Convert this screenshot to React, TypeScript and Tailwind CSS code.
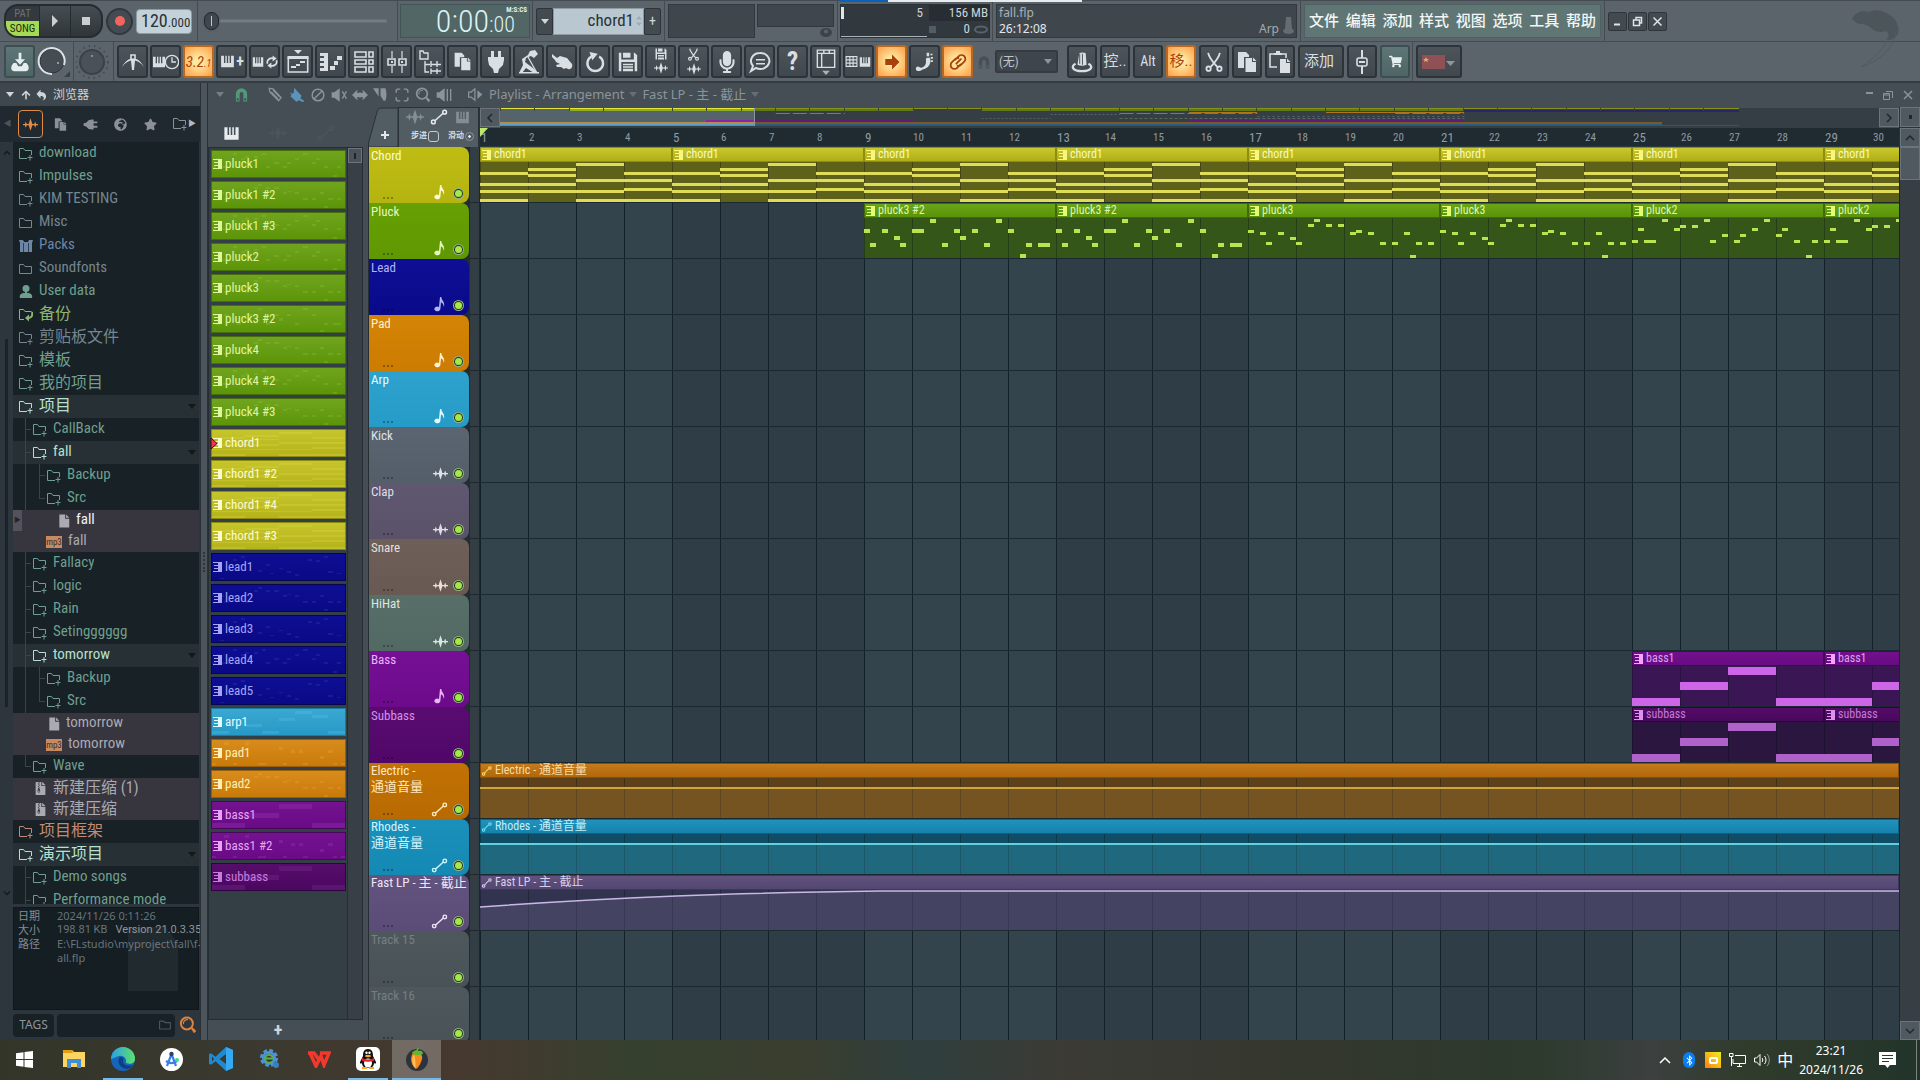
import React from "react";
import {
  FaRegFolder, FaStar, FaGlobeAfrica, FaFileArchive, FaMicrophone, FaShoppingCart, FaArrowUp, FaBluetoothB,
} from "react-icons/fa";

type Note = [number, number, number, number];

const NARROW = "[font-family:'Roboto_Condensed','Open_Sans_Condensed','Liberation_Sans_Narrow','Noto_Sans_CJK_SC',sans-serif]";

/* ---------- note data: x, y, width, height inside a 192 x 40 clip ---------- */
const bar = (b: number, ys: number[]): Note[] => ys.map((y) => [b * 48, y, 48, 3]);
const CHORD: Note[] = [
  ...bar(0, [10, 21, 28, 37]),
  ...bar(1, [6, 12, 21, 28]),
  ...bar(2, [1, 17, 28, 37]),
  ...bar(3, [10, 17, 26, 37]),
];
const steps = (list: number[][], h: number): Note[] => list.map(([s, y]) => [s * 6, y, 6, h]);
const PLUCK3B = steps([[0, 11], [1, 25], [3, 11], [5, 18], [6, 25], [8, 11], [9, 11], [11, 1], [13, 25], [15, 11], [16, 18], [18, 11], [20, 25], [22, 1], [24, 11], [26, 36], [27, 25], [29, 25], [30, 25]], 4);
const PLUCK3 = steps([[0, 12], [2, 14], [3, 24], [5, 14], [7, 19], [8, 24], [10, 6], [11, 1], [13, 6], [15, 6], [17, 14], [18, 12], [20, 14], [22, 24], [24, 24], [26, 14], [27, 37], [28, 24], [30, 24]], 3);
const PLUCK2 = steps([[0, 22], [1, 10], [2, 22], [3, 22], [5, 1], [7, 10], [8, 7], [10, 7], [12, 1], [13, 22], [15, 16], [17, 22], [18, 16], [20, 10], [22, 1], [24, 16], [25, 10], [27, 22], [29, 37], [30, 22]], 3);
const BASS: Note[] = [[0, 32, 48, 8], [48, 16, 48, 8], [96, 1, 48, 8], [144, 32, 48, 8]];
const LEAD = steps([[2, 36], [5, 6], [7, 1], [11, 24], [13, 14], [14, 28], [16, 20], [18, 26], [20, 30], [23, 6], [25, 8], [27, 1], [28, 26], [30, 28]], 3);
const ARP: Note[] = [[0, 34, 24, 5], [48, 22, 24, 5], [72, 34, 24, 5], [96, 12, 24, 5], [120, 1, 24, 5], [144, 8, 24, 5], [168, 34, 24, 5]];
const PAD = steps([[0, 35], [3, 2], [5, 35], [8, 2], [11, 35], [12, 35], [16, 10], [17, 35], [19, 15], [21, 15], [22, 35], [26, 24], [28, 15], [29, 35], [31, 35]], 4);

function Notes({ notes, color, opacity = 1, className }: { notes: Note[]; color: string; opacity?: number; className: string }) {
  return (
    <svg viewBox="0 0 192 40" preserveAspectRatio="none" className={className} aria-hidden="true">
      <g fill={color} opacity={opacity} shapeRendering="crispEdges">
        {notes.map(([x, y, w, h], i) => <rect key={i} x={x} y={y} width={w} height={h} />)}
      </g>
    </svg>
  );
}

/* ---------- drawn icons ---------- */
function Ico({ children, size = 24, className = "" }: { children: React.ReactNode; size?: number; className?: string }) {
  return (
    <svg width={size} height={size} viewBox="0 0 24 24" fill="currentColor" className={`shrink-0 ${className}`} aria-hidden="true">
      {children}
    </svg>
  );
}
const stroke = { fill: "none", stroke: "currentColor", strokeWidth: 1.6 } as const;
const Piano = () => <path d="M3 4h4v10h2V4h2v10h2V4h2v10h2V4h4v16H3z" />;
const Wave = () => <path d="M0 11h3l1.500-4L6 11h3l3-9 3 9h3l1.500-4 1.500 4h3v2h-3l-1.500 4-1.500-4h-3l-3 9-3-9H6l-1.500 4L3 13H0z" />;
const Auto = () => <g {...stroke} strokeWidth="2"><circle cx="4.500" cy="18.500" r="2.500" /><circle cx="19.500" cy="5.500" r="2.500" /><path d="M6.500 17 17.500 7" /></g>;
const Pages = () => <><path d="M3 2h8l3 3v2H9v11H3z" /><path d="M10.500 8H17v4h4v10H10.500z" /><path d="M18 7.500 21.500 11H18z" /></>;
const Page = () => <><path d="M4 1h10v7h7v15H4z" /><path d="M15.500 1 21 6.500h-5.500z" /></>;
const Floppy = () => <><path d="M1 1h3v8h15V1h1l3 3v19h-3v-11H4v11H1z" /><path d="M6 1h9v6H6z" /><path d="M6 14h12v2H6zM6 17h12v2H6zM6 20h12v3H6z" /></>;
const Scissors = () => <g {...stroke} strokeWidth="2.200"><path d="M5 1c1 6 5 10 11 17M19 1c-1 6-5 10-11 17" /><circle cx="5.500" cy="20" r="2.600" /><circle cx="18.500" cy="20" r="2.600" /></g>;
const Magnet = () => <path d="M3 23V11a9 9 0 0 1 18 0v12h-6V11a3 3 0 0 0-6 0v12zM4.500 18v3.500h3V18zM16.500 18v3.500h3V18z" fillRule="evenodd" />;
const Lens = () => <><circle cx="10.500" cy="10" r="8" {...stroke} strokeWidth="2.600" /><path d="M6 11a5 5 0 0 1 6-6" {...stroke} strokeWidth="1.500" /><path d="m16 17 2-2 5 5-3 3z" /></>;
const Plug = () => <path d="M7 1h3v6h4V1h3v6h3v3l-1 5-4 4-1 4h-4l-1-4-4-4-1-5V7h3z" />;
const PatIcon = ({ className = "" }: { className?: string }) => (
  <svg width="9" height="10" viewBox="0 0 9 10" fill="currentColor" shapeRendering="crispEdges" className={`shrink-0 ${className}`} aria-hidden="true">
    <path d="M0 0h9v10H0V9h5V7H1V6h4V4H1V3h4V1H0z" />
  </svg>
);
const Tri = ({ className = "" }: { className?: string }) => (
  <svg width="8" height="5" viewBox="0 0 8 5" fill="currentColor" className={`shrink-0 ${className}`} aria-hidden="true"><path d="M0 0h8L4 5z" /></svg>
);
const FolderPlus = ({ className = "" }: { className?: string }) => (
  <svg width="14" height="14" viewBox="0 0 14 14" fill="none" stroke="currentColor" className={`shrink-0 ${className}`} aria-hidden="true">
    <path d="M8 11.500H.5v-10h4l1.500 2h6.500V8M8.500 10.500h5M11 8v5.500" />
  </svg>
);
const Folder = () => (
  <svg width="14" height="12" viewBox="0 0 14 12" fill="none" stroke="currentColor" className="shrink-0" aria-hidden="true"><path d="M.5 10.500v-9h4l1.500 2h6.500v7z" /></svg>
);

/* ---------- top bar ---------- */
const Well = ({ className = "", children }: { className?: string; children?: React.ReactNode }) => (
  <div className={`border border-[#31393f] bg-[#3f474d] ${className}`}>{children}</div>
);
const Section = ({ className = "", children }: { className?: string; children?: React.ReactNode }) => (
  <div className={`flex h-full shrink-0 items-center border-r border-[#444c52] ${className}`}>{children}</div>
);
const Spin = ({ className = "" }: { className?: string }) => (
  <svg width="6" height="12" viewBox="0 0 6 12" fill="#9fabb2" className={className} aria-hidden="true"><path d="M0 4.500 3 1l3 3.500zM0 7.500h6L3 11z" /></svg>
);

function TopBar() {
  const menus = ["文件", "编辑", "添加", "样式", "视图", "选项", "工具", "帮助"];
  return (
    <header className="flex h-[42px] shrink-0 items-center border-b border-t border-[#444c52] bg-[#5b646a]">
      <Section className="w-[198px] pl-1">
        <div className="flex h-[34px] w-[99px] overflow-hidden rounded-[14px] border-2 border-[#262b2f] bg-[#262b2f]">
          <button className="flex w-[33px] flex-col items-center bg-[#33393d] text-[11px] leading-[15px]" aria-label="Pattern or song mode">
            <span className="text-[#6a7277]">PAT</span>
            <span className="w-full bg-[#a3dc52] text-center text-[#1d2a10]">SONG</span>
          </button>
          <button className="ml-px flex w-[30px] items-center justify-center bg-gradient-to-b from-[#474e53] to-[#2f3539]" aria-label="Play">
            <svg width="8" height="12" fill="#c9ced1"><path d="M1 0v12l6-6z" /></svg>
          </button>
          <button className="ml-px flex flex-1 items-center justify-center bg-gradient-to-b from-[#474e53] to-[#2f3539]" aria-label="Stop">
            <span className="size-2 bg-[#c9ced1]" />
          </button>
        </div>
        <button className="ml-[3px] flex size-[27px] items-center justify-center rounded-full border-2 border-[#31373c] bg-[#454c51]" aria-label="Record">
          <span className="size-[10px] rounded-full bg-[#f2645d]" />
        </button>
        <button className="ml-[3px] flex h-[25px] w-[56px] items-center rounded-[4px] border border-[#8e9ba2] bg-[#c3d1d8] pl-1 text-[#2a3237]" aria-label="Tempo">
          <span className="text-[18px] leading-6">120</span><span className="pt-[3px] text-[13px] leading-5">.000</span>
          <Spin className="ml-px" />
        </button>
      </Section>
      <Section className="w-[200px] px-[6px]">
        <span className="z-10 flex h-[18px] w-[15px] justify-center rounded-full border border-[#20262a] bg-[#3f474c] pt-[3px] shadow"><span className="h-[10px] w-px bg-[#b5e25a]" /></span>
        <span className="mr-1 h-1 flex-1 border border-[#666f75] bg-[#737c82]" />
      </Section>
      <Section className="w-[135px] px-[2px]">
        <div className="flex h-[34px] flex-1 items-start justify-end border border-[#3f5657] bg-[#526665] pr-[2px] font-light text-[#d9f3f5]">
          <span className="text-[32px] leading-8">0:00</span>
          <div className="flex w-[38px] flex-col">
            <span className="self-end pt-px text-[7px] font-bold leading-[8px]">M:S:CS</span>
            <span className="text-[22px] leading-[22px]">:00</span>
          </div>
        </div>
      </Section>
      <Section className="w-[132px] px-[3px]">
        <button className="flex h-[27px] w-[17px] items-center justify-center rounded-[2px] border border-[#2e353a] bg-[#434a50] text-[#d0d6da]" aria-label="Pattern menu"><Tri /></button>
        <button className="flex h-[27px] flex-1 items-center justify-end gap-[2px] border border-[#8e9ba2] bg-[#b9c8d0] pr-px text-[17px] text-[#2a3237]">chord1<Spin /></button>
        <button className="flex h-[27px] w-[17px] items-center justify-center rounded-[2px] border border-[#2e353a] bg-[#434a50] text-[14px] text-[#d0d6da]" aria-label="Add pattern">+</button>
      </Section>
      <Section className="w-[173px] gap-[2px] px-[3px]">
        <Well className="h-[34px] w-[87px]" />
        <div className="flex h-[34px] flex-1 flex-col items-end">
          <Well className="h-[23px] w-full" />
          <svg width="14" height="11" viewBox="0 0 14 11" className="mr-px"><ellipse cx="7" cy="5.500" rx="6" ry="4.500" fill="#3c444a" /><circle cx="7" cy="4.500" r="2" fill="#5b646a" /></svg>
        </div>
      </Section>
      <Section className="w-[155px] items-start px-[2px]">
        <div className="-mt-px w-full">
          <div className="-mr-[92px] flex h-[2px]"><span className="w-12 bg-[#0a63b8]" /><span className="flex-1 bg-[#e9ecee]" /></div>
          <div className="mt-[2px] grid h-[34px] grid-cols-[86px_1fr] grid-rows-2 gap-x-[2px] border border-[#2b3237] bg-[#31383e] text-right text-[13px] leading-4 text-[#cdd4d8]">
            <div className="row-span-2 flex items-start justify-between border-b border-[#a9b1b5] pr-1"><span className="mt-[2px] h-3 w-[3px] bg-[#dfe4e6]" />5</div>
            <div className="bg-[#272d33] pr-px">156 MB</div>
            <div className="flex items-center justify-end gap-1 pr-px"><span className="mr-auto size-[7px] bg-[#535c62]" />0<svg width="14" height="9"><ellipse cx="7" cy="4.500" rx="6" ry="3" fill="none" stroke="#59636a" strokeWidth="2" /></svg></div>
          </div>
        </div>
      </Section>
      <Section className="w-[308px] px-[3px]">
        <Well className="flex h-[34px] w-full justify-between px-[2px] leading-4 [font-family:'Noto_Sans',sans-serif]">
          <div><div className="text-[12px] text-[#aab1b5]">fall.flp</div><div className="text-[12px] text-[#e4e8ea]">26:12:08</div></div>
          <div className="flex items-end gap-1 text-[12px] text-[#a3aaae]">Arp
            <svg width="11" height="18" viewBox="0 0 11 18" fill="#656d72" className="mb-[2px]"><path d="M3 0h5l1 12H2z" /><ellipse cx="5.500" cy="14" rx="5.500" ry="3" /></svg>
          </div>
        </Well>
      </Section>
      <Section className="w-[304px] px-[3px]">
        <nav className="flex h-[34px] w-full items-center justify-between border border-[#4b6261] bg-[#607675] px-[4px]">
          {menus.map((m) => <button key={m} className="text-[15px] font-medium text-[#f2f7f6]">{m}</button>)}
        </nav>
      </Section>
      <div className="flex gap-px pl-[3px] text-[#dfe4e7]">
        {["Minimize", "Restore", "Close"].map((n, i) => (
          <button key={n} aria-label={n} className="flex size-[19px] items-center justify-center rounded-[2px] border border-[#2f363b] bg-[#434b51]">
            <svg width="11" height="11" viewBox="0 0 11 11" fill="none" stroke="currentColor" strokeWidth="1.500">
              {i === 0 && <path d="M2 8.500h6" strokeWidth="2" />}
              {i === 1 && <path d="M1.500 4h6v5.500h-6zM4 3.500v-2h5.500V7H8" />}
              {i === 2 && <path d="m1.500 1.500 8 8m0-8-8 8" />}
            </svg>
          </button>
        ))}
      </div>
      <svg width="68" height="72" viewBox="0 0 68 72" className="relative z-10 ml-auto mr-1 self-start" fill="#4c555a" aria-hidden="true">
        <path d="M4 18c3-7 10-9 17-7 5-3 13-2 19 2 8 4 12 12 10 20-3 5-7 6-11 6 2-3 2-7-1-9-5 2-11 1-15-3-4-3-6-4-10-4-3 0-6-2-9-5z" />
        <path d="M48 30c-1 14-14 30-35 36 14-9 26-20 28-34" fill="none" stroke="#525b61" />
      </svg>
    </header>
  );
}

/* ---------- tool row ---------- */
type Tone = "dark" | "hot" | "teal";
const TONES: Record<Tone, string> = {
  dark: "border-[#2d3439] bg-gradient-to-b from-[#4d555b] to-[#40484e] text-[#d9dfe3]",
  hot: "border-[#b8691f] bg-[radial-gradient(circle,#ffe9a0_20%,#ff9c45_100%)] text-[#a8400c]",
  teal: "border-[#3a4f50] bg-gradient-to-b from-[#5f7676] to-[#4e6465] text-[#e6efef]",
};
function Tool({ label, tone = "dark", className = "w-[31px]", children }: { label: string; tone?: Tone; className?: string; children: React.ReactNode }) {
  return <button aria-label={label} className={`flex h-[33px] shrink-0 items-center justify-center overflow-hidden rounded-[3px] border-2 ${TONES[tone]} ${className}`}>{children}</button>;
}
const Hat = () => (
  <Ico size={22}>
    <path d="M9 2.500c2-1.300 5-1.300 7 0L17 15c-3 1.500-7 1.500-10 0z" />
    <path d="M9.500 3v11M12.500 3v12" stroke="#454d53" />
    <path d="M5 14c-6 3-3 8 7 8s13-5 7-8" {...stroke} strokeWidth="2.500" />
  </Ico>
);

function ToolRow() {
  const tools: [string, React.ReactNode, Tone?][] = [
    ["Metronome", <Ico><path d="M1 17C4 11 8 8.500 12 8.500S20 11 23 17c-3-4-6-6-9-6.500L13 20h-2l-1-9.500C7 11 4 13 1 17z" /><path d="M10 5h4v4l-2 2-2-2z" {...stroke} /></Ico>],
    ["Wait for input", <><Ico size={16} className="-mr-[3px]"><Piano /></Ico><Ico size={16}><circle cx="12" cy="12" r="10" {...stroke} strokeWidth="2" /><path d="M12 5v7h6" {...stroke} strokeWidth="2" /></Ico></>],
    ["Countdown", <span className="flex items-end text-[15px] italic leading-5">3.2<span className="text-[10px] leading-4">.1</span></span>, "hot"],
    ["Overdub", <><Ico size={17}><Piano /></Ico><span className="text-[16px] font-bold leading-4">+</span></>],
    ["Loop record", <><Ico size={14}><Piano /></Ico><Ico size={14}><path d="M4 15V11a8 7 0 0 1 11-5M20 9v4a8 7 0 0 1-11 5" {...stroke} strokeWidth="3" /><path d="M13 1l7 5-7 5zM11 13l-7 5 7 5z" /></Ico></>],
    ["Playlist", <Ico><path d="M8 0h8l-4 4zM1.500 6h21v3h-21z" /><path d="M2.300 8h19.400v14H2.300z" {...stroke} /><path d="M5 16h5v2H5zM10 14h4v2h-4zM14 11h5v2h-5z" /></Ico>],
    ["Piano roll", <Ico><path d="M1 3h8v18H1v-3h4v-2H1v-3h4v-2H1V8h4V6H1zM11 16h5v4h-5zM15 11h4v4h-4zM18 6h5v4h-5z" /></Ico>],
    ["Channel rack", <Ico><g {...stroke}><path d="M3 2h11v5H3zM17 2h4v5h-4zM3 10h11v4H3zM17 10h4v4h-4zM3 17h11v5H3zM17 17h4v5h-4z" /></g></Ico>],
    ["Mixer", <Ico><g {...stroke}><path d="M7 1v7M7 16v7M17 1v7M17 16v7" strokeWidth="1.200" /><path d="M3 9h7v6H3zM14 9h7v6h-7z" /></g><path d="M6 11h2v2H6zM16 11h2v2h-2z" /></Ico>],
    ["Browser", <Ico><g {...stroke} strokeWidth="1.400"><path d="M2 1h3l1 2h4v6H2zM7 11v11h4M7 14.500h5M13 11v6M13 18.500V24M19 11v6M19 18.500V24M13 14.500h10M13 21h10" /></g></Ico>],
    ["Project picker", <Ico size={21}><Pages /></Ico>],
    ["Plugin picker", <Ico size={24}><Plug /></Ico>],
    ["Tempo tapper", <Ico><path d="m13 1 5-1 3 4-4 4-3-2-5 2-1 4 8 6 5 5h-4l-8-5-4 5H2l4-8-1-6 6-4z" /><path d="M11 7l9 16" {...stroke} strokeWidth="1.200" /><path d="M2 22h20v1.500H2z" /></Ico>],
    ["Touch controllers", <Ico><path d="M2 4l5 4 3-2 7 2 5 6c1 3-1 6-4 5l-2-1-2 1-3-2-4 0-1-2 4-1-4-2-1-2-3-3z" /></Ico>],
    ["Undo", <Ico size={22}><path d="M8 6a8.500 8.500 0 1 0 8.500 0" {...stroke} strokeWidth="2.600" /><path d="M6 1l9 2-6 7z" /></Ico>],
    ["Save", <Ico size={20}><Floppy /></Ico>],
    ["Save as wave", <span className="flex flex-col items-center gap-px"><Ico size={12}><Floppy /></Ico><Ico size={14}><Wave /></Ico></span>],
    ["Edit audio", <span className="flex flex-col items-center gap-px"><Ico size={13}><Scissors /></Ico><Ico size={14}><Wave /></Ico></span>],
    ["Record audio", <FaMicrophone size={22} />],
    ["News", <Ico><path d="M12 3a9 8 0 1 1-4 15l-5 3 2-5a9 8 0 0 1 7-13z" {...stroke} strokeWidth="2" /><path d="M8 9h9v1.500H8zM8 13h9v1.500H8z" /></Ico>],
    ["Help", <span className="text-[25px] font-bold leading-6">?</span>],
    ["Window layout", <Ico size={26}><g {...stroke} strokeWidth="1.300"><path d="M4 1h16v16H4zM4 4h16M8 4v13M10 1v3M15 1v3" /></g><path d="M8.500 20h7L12 24z" opacity=".7" /></Ico>],
    ["Typing keyboard", <><Ico size={13}><path d="M2 3h20v18H2z M2 9h20M2 15h20M9 3v18M15 3v18" {...stroke} strokeWidth="2" /></Ico><Ico size={14}><Piano /></Ico></>],
    ["Step edit", <Ico size={18}><path d="M3 8h9V2l10 10-10 10v-6H3z" /></Ico>, "hot"],
    ["Slide", <Ico size={20}><path d="M1 20a2.500 2.500 0 0 1 4-2l2 1c5-1 7-5 6-10l1-2h4c2 7-2 13-9 14-4 3-8 2-8-1zM14 1h3v4h-3zM18.500 2H21v2h-2.500zM19 6h2.500v2H19zM19 10h2.500v2H19z" /></Ico>],
    ["Multilink", <Ico size={20}><g {...stroke} strokeWidth="2.200" strokeLinecap="round"><path d="M10 14 15.500 8.500M9 9l4-4a4.500 4.500 0 0 1 6.500 6.500l-4 4a4.500 4.500 0 0 1-4 1M15 15l-4 4A4.500 4.500 0 0 1 4.500 12.500l4-4a4.500 4.500 0 0 1 4-1" /></g></Ico>, "hot"],
  ];
  return (
    <div className="flex h-[41px] shrink-0 items-center border-b-2 border-[#343c42] bg-[#5b646a]" role="toolbar">
      <div className="flex h-full w-[74px] shrink-0 items-center border-r border-[#444c52] pl-1">
        <Tool label="Install" tone="teal"><Ico size={22}><path d="M10.500 2h3v7h4L12 15 6.500 9h4z" /><path d="M5 13h3l2 3.500h4l2-3.500h3c4 4 3 9-1 9H6c-4 0-5-5-1-9z" /></Ico></Tool>
        <svg width="36" height="34" viewBox="0 0 36 34" className="ml-[2px]"><circle cx="15" cy="16" r="12" fill="#454d53" stroke="#2f363b" /><path d="M15 29A13 13 0 1 1 27 20" fill="none" stroke="#dce3e7" strokeWidth="2" /><circle cx="21" cy="18" r="1" fill="#aeb6ba" /><path d="M33 26v6h-6z" fill="#394147" /></svg>
      </div>
      <div className="flex h-full w-[40px] shrink-0 items-center justify-center border-r border-[#444c52]">
        <svg width="36" height="38" viewBox="0 0 36 38"><circle cx="16" cy="19" r="16" fill="none" stroke="#444c52" strokeWidth="2" strokeDasharray="1.500 4" /><circle cx="16" cy="19" r="12" fill="#4a5258" stroke="#3a4248" strokeWidth="2" /><circle cx="16" cy="13" r="1" fill="#9aa3a8" /></svg>
      </div>
      <div className="flex shrink-0 gap-[2px] pl-[3px]">
        {tools.map(([l, node, tone]) => <Tool key={l} label={l} tone={tone}>{node}</Tool>)}
      </div>
      <Ico size={14} className="ml-[4px] text-[#484f55]"><Magnet /></Ico>
      <div className="ml-1 mr-[9px] flex h-[23px] w-[63px] shrink-0 items-center rounded-[2px] border-2 border-[#343b41] bg-[#3e464c] text-[#8b949a]">
        <select aria-label="Snap" defaultValue="(无)" className="w-full appearance-none bg-transparent pl-[2px] text-[12px] text-[#bfc6ca]"><option>(无)</option></select>
        <Tri className="pointer-events-none -ml-3 mr-[3px]" />
      </div>
      <div className="flex h-full shrink-0 items-center gap-[3px] border-r border-[#444c52] pr-[2px]">
        <Tool label="Hat" className="w-[30px]"><Hat /></Tool>
        <Tool label="Control" className="w-[30px] text-[15px]">控..</Tool>
        <Tool label="Alt" className="w-[30px] text-[14px]">Alt</Tool>
        <Tool label="Move" tone="hot" className="w-[30px] text-[15px]">移..</Tool>
        <Tool label="Cut" className="w-[30px]"><Ico size={20}><Scissors /></Ico></Tool>
        <Tool label="Copy" className="w-[30px]"><Ico size={24}><Pages /></Ico></Tool>
        <Tool label="Paste" className="w-[30px]"><Ico size={24}><path d="M9 17H2V4h4M14 4h4v4" {...stroke} /><path d="M6 5V3h2V1h4v2h2v2zM12 9h6v4h4v10H12z" /><path d="M19 8.500 22.500 12H19z" /></Ico></Tool>
        <Tool label="Add" className="w-[46px] pr-1 text-[15px]">添加</Tool>
        <Tool label="Fader" className="w-[30px]"><Ico><path d="M11 0h2v8h-2zM11 16h2v8h-2z" /><rect x="7" y="8" width="10" height="8" rx="2" {...stroke} /><path d="M9 11h6v2H9z" /></Ico></Tool>
        <Tool label="Shop" tone="teal" className="w-[30px]"><FaShoppingCart size={13} /></Tool>
      </div>
      <Tool label="Language" className="ml-[3px] w-[46px]">
        <svg width="34" height="16" viewBox="0 0 34 16"><path d="M0 1h23v14H0z" fill="#8f5155" /><path d="m4 3 .8 2H7L5.300 6.200 6 8 4 7 2 8l.7-1.800L1 5h2.200z" fill="#d5b96a" /><path d="M24 7h9l-4.500 5z" fill="#8e979c" /></svg>
      </Tool>
    </div>
  );
}

/* ---------- browser ---------- */
type Kind = "plus" | "folder" | "pack" | "user" | "back" | "file" | "mp3" | "zip";
type Entry = { name: string; kind: Kind; color: string; d?: number; open?: boolean; end?: boolean; sel?: boolean };
const GREEN = "text-[#6f9f8e]";
const SLATE = "text-[#74868f]";
const LIT = "text-[#b5e0cf]";
const GREY = "text-[#a9aab2]";
const entries: Entry[] = [
  { name: "download", kind: "plus", color: GREEN },
  { name: "Impulses", kind: "plus", color: GREEN },
  { name: "KIM TESTING", kind: "plus", color: SLATE },
  { name: "Misc", kind: "folder", color: SLATE },
  { name: "Packs", kind: "pack", color: "text-[#6d86a6]" },
  { name: "Soundfonts", kind: "folder", color: SLATE },
  { name: "User data", kind: "user", color: GREEN },
  { name: "备份", kind: "back", color: "text-[#8fb572]" },
  { name: "剪贴板文件", kind: "plus", color: SLATE },
  { name: "模板", kind: "plus", color: GREEN },
  { name: "我的项目", kind: "plus", color: GREEN },
  { name: "项目", kind: "plus", color: LIT, open: true },
  { name: "CallBack", kind: "plus", color: GREEN, d: 1 },
  { name: "fall", kind: "plus", color: LIT, d: 1, open: true },
  { name: "Backup", kind: "plus", color: GREEN, d: 2 },
  { name: "Src", kind: "plus", color: GREEN, d: 2, end: true },
  { name: "fall", kind: "file", color: "text-[#f3f3f5]", sel: true },
  { name: "fall", kind: "mp3", color: GREY },
  { name: "Fallacy", kind: "plus", color: GREEN, d: 1 },
  { name: "logic", kind: "plus", color: GREEN, d: 1 },
  { name: "Rain", kind: "plus", color: GREEN, d: 1 },
  { name: "Setingggggg", kind: "plus", color: GREEN, d: 1 },
  { name: "tomorrow", kind: "plus", color: LIT, d: 1, open: true },
  { name: "Backup", kind: "plus", color: GREEN, d: 2 },
  { name: "Src", kind: "plus", color: GREEN, d: 2, end: true },
  { name: "tomorrow", kind: "file", color: GREY },
  { name: "tomorrow", kind: "mp3", color: GREY },
  { name: "Wave", kind: "plus", color: GREEN, d: 1, end: true },
  { name: "新建压缩 (1)", kind: "zip", color: GREY },
  { name: "新建压缩", kind: "zip", color: GREY },
  { name: "项目框架", kind: "plus", color: "text-[#c08a74]" },
  { name: "演示项目", kind: "plus", color: LIT, open: true },
  { name: "Demo songs", kind: "plus", color: GREEN, d: 1 },
  { name: "Performance mode", kind: "plus", color: GREEN, d: 1 },
];
function Guide({ tick, end }: { tick: boolean; end?: boolean }) {
  return (
    <span className={`flex shrink-0 flex-col self-stretch ${tick ? "w-2" : "w-[14px]"}`} aria-hidden="true">
      <span className={`w-[6px] flex-1 border-l border-[#3a454b] ${tick ? "border-b" : ""}`} />
      <span className={`w-[6px] flex-1 border-[#3a454b] ${end ? "" : "border-l"}`} />
    </span>
  );
}
function EntryIcon({ kind }: { kind: Kind }) {
  if (kind === "folder") return <Folder />;
  if (kind === "pack") return <svg width="14" height="12" viewBox="0 0 14 12" fill="currentColor" className="shrink-0"><path d="M0 0h4l1 2h4l1-2h4l-1 3v9H1V3z" /><path d="M4.500 3v9M9.500 3v9" stroke="#182126" strokeWidth=".7" /></svg>;
  if (kind === "user") return <svg width="14" height="13" viewBox="0 0 14 13" fill="currentColor" className="shrink-0"><circle cx="7" cy="3.500" r="3.500" /><path d="M6 6h2v2c4 0 6 2 5 5H1c-1-3 1-5 5-5z" /></svg>;
  if (kind === "back") return <svg width="14" height="14" viewBox="0 0 14 14" fill="none" stroke="currentColor" className="shrink-0"><path d="M5 11.500H.5v-10h4l1.500 2h6.500" /><path d="M13 4c1 4-1 6-4 6" strokeWidth="2" /><path d="m6 10 4-3.500v7z" fill="currentColor" stroke="none" /></svg>;
  if (kind === "file") return <Ico size={14} className="-mx-px text-[#a9aab2]"><Page /></Ico>;
  if (kind === "zip") return <FaFileArchive size={13} className="shrink-0" />;
  if (kind === "mp3") return <span className="w-[16px] shrink-0 bg-[#c98a62] text-center text-[9px] leading-[12px] text-[#3b2d2a]">mp3</span>;
  return <FolderPlus />;
}
const TAB = "flex h-7 w-[30px] shrink-0 items-center justify-center";
function Browser() {
  return (
    <aside className="flex w-[200px] shrink-0 flex-col bg-[#2d363c]">
      <div className="flex h-[23px] items-center gap-[5px] bg-[#3d474d] pl-[6px] text-[#cfd5d8]">
        <Tri /><FaArrowUp size={10} className="ml-[2px]" /><Ico size={12}><path d="M9 1v5c9 0 12 6 11 11-1 3-4 5-7 6 4-4 4-9-4-9v5L1 10z" /></Ico><h2 className="text-[12px]">浏览器</h2>
      </div>
      <div className="flex h-9 items-center overflow-hidden bg-[#20292f] text-[#8b9196]">
        <span className="w-[15px] text-center text-[8px] text-[#4b545a]">◀</span>
        <button aria-label="All" className={TAB}><span className="flex h-7 w-[25px] items-center justify-center rounded-[4px] border border-[#e08b45] text-[#e08b45]"><Ico size={15}><Wave /></Ico></span></button>
        <button aria-label="Project" className={TAB}><Ico size={15}><Pages /></Ico></button>
        <button aria-label="Plugins" className={TAB}><Ico size={15} className="rotate-90"><Plug /></Ico></button>
        <button aria-label="Online" className={TAB}><FaGlobeAfrica size={13} /></button>
        <button aria-label="Starred" className={TAB}><FaStar size={13} /></button>
        <button aria-label="More" className="flex items-center gap-px pl-2"><FolderPlus /><span className="text-[8px] text-[#b5babd]">▶</span></button>
      </div>
      <div className="flex min-h-0 flex-1">
        <div className="flex w-[13px] shrink-0 flex-col items-center justify-between py-2 text-[#151c21]">
          <svg width="8" height="5" fill="none" stroke="currentColor" strokeWidth="1.500"><path d="m1 4.500 3-3 3 3" /></svg>
          <span className="mt-[170px] h-[368px] w-[3px] bg-[#1b2328]" />
          <svg width="8" height="5" fill="none" stroke="currentColor" strokeWidth="1.500" className="mt-[170px]"><path d="m1 .5 3 3 3-3" /></svg>
        </div>
        <ul className="mr-px min-w-0 flex-1 overflow-hidden bg-[#182126]">
          {entries.map((e, i) => {
            const isFile = e.kind === "file" || e.kind === "mp3" || e.kind === "zip";
            const cjk = e.name.charCodeAt(0) > 255;
            return (
              <li key={i} className={`flex items-center ${isFile ? "h-[21px] bg-[#37353e]" : e.open ? "h-[23px] bg-[#273035]" : "h-[23px]"} ${e.color}`}>
                {!isFile && <span className={`shrink-0 ${e.d ? "w-3" : "w-[6px]"}`} />}
                {e.d === 1 && <Guide tick end={e.end} />}
                {e.d === 2 && <><Guide tick={false} /><Guide tick end={e.end} /></>}
                {e.sel && <span className="flex h-[21px] w-[9px] shrink-0 items-center justify-center bg-[#54535b] text-[7px] text-[#23252b]">▶</span>}
                {isFile && <span className={`shrink-0 ${e.sel ? "w-[36px]" : e.kind === "zip" ? "w-[21px]" : e.kind === "file" ? "w-[35px]" : "w-[33px]"}`} />}
                <EntryIcon kind={e.kind} />
                <span className={`truncate pb-[2px] pl-[6px] ${cjk ? "text-[16px] leading-5" : "text-[15px] leading-[19px]"}`}>{e.name}</span>
                {e.open && <Tri className="ml-auto mr-[3px] text-[#11181c]" />}
              </li>
            );
          })}
        </ul>
      </div>
      <div className="mb-[3px] ml-[13px] mr-px mt-[3px] flex h-[103px] border border-[#10171b] bg-[#151e23] pl-1 pt-px text-[11px] leading-[14px] text-[#68747a] [font-family:'Noto_Sans','Noto_Sans_CJK_SC',sans-serif]">
        <dl className="grid h-fit w-full shrink-0 grid-cols-[39px_1fr]">
          <dt className="text-[#848d92]">日期</dt><dd>2024/11/26 0:11:26</dd>
          <dt className="text-[#848d92]">大小</dt><dd className="flex justify-between whitespace-nowrap [font-family:Roboto,sans-serif]">198.81 KB<span className="text-[#8d969a]">Version 21.0.3.35</span></dd>
          <dt className="text-[#848d92]">路径</dt><dd>E:\FLstudio\myproject\fall\f-<br />all.flp</dd>
        </dl>
        <div className="w-0"><div className="-ml-[70px] mt-[18px] h-[64px] w-[50px] bg-[#8fa0a0]/10 [clip-path:polygon(0_0,75%_0,100%_25%,100%_100%,0_100%)]" /></div>
      </div>
      <div className="mb-[3px] ml-[13px] flex h-[24px] items-center gap-[3px]">
        <button className="h-[23px] w-[41px] rounded-[4px] bg-[#182126] text-[12px] text-[#8d969a] [font-family:'Noto_Sans',sans-serif]">TAGS</button>
        <label className="flex h-[23px] w-[118px] items-center rounded-[4px] bg-[#182126] pr-1 text-[#4b5459]">
          <input aria-label="Search tags" className="w-full min-w-0 bg-transparent outline-none" /><FaRegFolder size={12} className="shrink-0" />
        </label>
        <button aria-label="Search" className="ml-px text-[#dc8440]"><Ico size={18}><Lens /></Ico></button>
      </div>
    </aside>
  );
}

/* ---------- pattern picker ---------- */
const P_GREEN = "border-[#456f0a] from-[#70a41d] to-[#5c9508] text-[#e0f5a0]";
const P_YELLOW = "border-[#8d8b0c] from-[#c6c52b] to-[#b5b31a] text-[#fbfbd0]";
const P_BLUE = "border-[#050552] from-[#0e0e94] to-[#0a0a86] text-[#a6a6f2]";
const P_CYAN = "border-[#1c7ba0] from-[#39a8d2] to-[#2799c6] text-[#e2fbff]";
const P_ORANGE = "border-[#9b5d05] from-[#d88c1c] to-[#c97b08] text-[#fff0b8]";
const P_PURPLE = "border-[#48065b] from-[#74128f] to-[#6a0b86] text-[#e6a6f5]";
const P_SUB = "border-[#2e0440] from-[#560d6b] to-[#4b0860] text-[#c97be0]";
const patterns: [string, string, string, Note[]][] = [
  ["pluck1", P_GREEN, "#a0cf50", PLUCK2], ["pluck1 #2", P_GREEN, "#a0cf50", PLUCK3], ["pluck1 #3", P_GREEN, "#a0cf50", PLUCK2],
  ["pluck2", P_GREEN, "#a0cf50", PLUCK2], ["pluck3", P_GREEN, "#a0cf50", PLUCK3], ["pluck3 #2", P_GREEN, "#a0cf50", PLUCK3B],
  ["pluck4", P_GREEN, "#a0cf50", PLUCK3], ["pluck4 #2", P_GREEN, "#a0cf50", PLUCK2], ["pluck4 #3", P_GREEN, "#a0cf50", PLUCK3],
  ["chord1", P_YELLOW, "#e6e35a", CHORD], ["chord1 #2", P_YELLOW, "#e6e35a", CHORD], ["chord1 #4", P_YELLOW, "#e6e35a", CHORD], ["chord1 #3", P_YELLOW, "#e6e35a", CHORD],
  ["lead1", P_BLUE, "#5050c8", LEAD], ["lead2", P_BLUE, "#5050c8", PLUCK3], ["lead3", P_BLUE, "#5050c8", LEAD], ["lead4", P_BLUE, "#5050c8", PLUCK2], ["lead5", P_BLUE, "#5050c8", LEAD],
  ["arp1", P_CYAN, "#6fcdec", ARP],
  ["pad1", P_ORANGE, "#f3b54a", PAD], ["pad2", P_ORANGE, "#f3b54a", PLUCK3],
  ["bass1", P_PURPLE, "#b04ecb", BASS], ["bass1 #2", P_PURPLE, "#b04ecb", PAD], ["subbass", P_SUB, "#9340ad", BASS],
];
function Picker() {
  return (
    <div className="flex w-[155px] shrink-0 flex-col">
      <div className="flex h-10 items-center pt-3 text-[#4c555b]">
        <Ico size={19} className="ml-[14px] text-[#e8ecee]"><Piano /></Ico><Ico size={18} className="ml-[28px]"><Wave /></Ico><Ico size={18} className="ml-[30px]"><Auto /></Ico>
      </div>
      <div className="flex min-h-0 flex-1 border border-[#262e33] bg-[#343e45]">
        <ul className="flex flex-1 flex-col gap-[3px] pl-[2px] pr-px pt-[2px]">
          {patterns.map(([n, cls, color, notes]) => (
            <li key={n} className={`grid h-7 shrink-0 items-center border bg-gradient-to-b ${cls}`}>
              <Notes notes={notes} color={color} opacity={0.22} className="col-start-1 row-start-1 h-[25px] w-full" />
              <button className="col-start-1 row-start-1 flex items-center gap-[3px] pl-px text-left text-[13px] leading-5">
                {n === "chord1" && <svg width="9" height="13" viewBox="0 0 9 13" className="z-10 -ml-[3px] -mr-[9px]"><path d="M1 1v11l6-5.500z" fill="#e8365e" stroke="#3a0a16" /></svg>}
                <PatIcon />
                {n}
              </button>
            </li>
          ))}
        </ul>
        <div className="w-[15px] shrink-0 border-l border-[#262e33] bg-[#383f45]"><button aria-label="Picker options" className="flex h-[15px] w-full items-center justify-center border border-[#6c757b] bg-[#4a535a]"><span className="h-[6px] w-[2px] bg-[#1d2327]" /></button></div>
      </div>
      <button className="h-5 pr-[15px] text-[18px] font-bold leading-5 text-[#cfd5d8]" aria-label="Add pattern to picker">+</button>
    </div>
  );
}

/* ---------- playlist ---------- */
type ClipSkin = { head: string; body: string; icon: string; note: string };
const SK_CHORD: ClipSkin = { head: "border-[#8f8d0d] from-[#c9c82c] to-[#b0ae14] text-[#f7f7c4]", body: "bg-[#5e611a]", icon: "text-[#f8f67e]", note: "#dedc5a" };
const SK_PLUCK: ClipSkin = { head: "border-[#3d6b06] from-[#6aa516] to-[#5a9208] text-[#dcf5b0]", body: "bg-[#345719]", icon: "text-[#e2f97a]", note: "#b9e450" };
const SK_BASS: ClipSkin = { head: "border-[#48065b] from-[#72118c] to-[#680b83] text-[#dda0ee]", body: "bg-[#3a1654]", icon: "text-[#f2a6fa]", note: "#cc66e6" };
const SK_SUB: ClipSkin = { head: "border-[#2e0440] from-[#540c69] to-[#48085c] text-[#c07bd6]", body: "bg-[#2b1640]", icon: "text-[#dd90ee]", note: "#b062ca" };
const SK_ELEC: ClipSkin = { head: "border-[#8a4e05] from-[#c57a1b] to-[#b0680a] text-[#f7dca8]", body: "bg-[#5e401a]", icon: "text-[#fbe36b]", note: "#d0a63f" };
const SK_RHOD: ClipSkin = { head: "border-[#0c6388] from-[#2292bd] to-[#1382ad] text-[#c3eef8]", body: "bg-[#0f4e66]", icon: "text-[#6be8f0]", note: "#5ed0de" };
const SK_FAST: ClipSkin = { head: "border-[#3f3560] from-[#61527f] to-[#534671] text-[#d8cfea]", body: "bg-[#31334f]", icon: "text-[#dcd2f0]", note: "#c9b8e6" };
const BARS = "bg-[repeating-linear-gradient(90deg,rgba(0,10,20,.3)_0px,rgba(0,10,20,.3)_1px,transparent_1px,transparent_48px)]";

type Clip = { name: string; notes: Note[] };
type Track = { name: string; bg: string; text: string; icon?: "note" | "wave" | "auto"; skin?: ClipSkin; lead?: string; clips?: Clip[]; auto?: "flat" | "curve" };
const rep = (n: number, name: string, notes: Note[]): Clip[] => Array.from({ length: n }, () => ({ name, notes }));
const tracks: Track[] = [
  { name: "Chord", bg: "from-[#bfbd14] to-[#b5b30f]", text: "text-[#fbfbd2]", icon: "note", skin: SK_CHORD, lead: "w-0", clips: rep(8, "chord1", CHORD) },
  { name: "Pluck", bg: "from-[#66a003] to-[#5f9802]", text: "text-[#e4f7c0]", icon: "note", skin: SK_PLUCK, lead: "w-96", clips: [...rep(2, "pluck3 #2", PLUCK3B), ...rep(2, "pluck3", PLUCK3), ...rep(2, "pluck2", PLUCK2)] },
  { name: "Lead", bg: "from-[#0f0f96] to-[#09098a]", text: "text-[#b3b3f2]", icon: "note" },
  { name: "Pad", bg: "from-[#d48405] to-[#cb7c02]", text: "text-[#fff0d2]", icon: "note" },
  { name: "Arp", bg: "from-[#2ea2cd] to-[#259bc7]", text: "text-[#e6fbff]", icon: "note" },
  { name: "Kick", bg: "from-[#5a6571] to-[#535e69]", text: "text-[#dfe3e7]", icon: "wave" },
  { name: "Clap", bg: "from-[#605871] to-[#595268]", text: "text-[#dfdce6]", icon: "wave" },
  { name: "Snare", bg: "from-[#6e6058] to-[#685a52]", text: "text-[#e6dfda]", icon: "wave" },
  { name: "HiHat", bg: "from-[#586f69] to-[#526963]", text: "text-[#dbe6e2]", icon: "wave" },
  { name: "Bass", bg: "from-[#761096] to-[#6c0a8b]", text: "text-[#e8b4f5]", icon: "note", skin: SK_BASS, lead: "w-[1152px]", clips: rep(2, "bass1", BASS) },
  { name: "Subbass", bg: "from-[#590c70] to-[#500768]", text: "text-[#d690ea]", skin: SK_SUB, lead: "w-[1152px]", clips: rep(2, "subbass", BASS) },
  { name: "Electric - 通道音量", bg: "from-[#c27203] to-[#b86a02]", text: "text-[#ffe9bf]", icon: "auto", skin: SK_ELEC, auto: "flat" },
  { name: "Rhodes - 通道音量", bg: "from-[#1a90bb] to-[#1389b3]", text: "text-[#d3f5ff]", icon: "auto", skin: SK_RHOD, auto: "flat" },
  { name: "Fast LP - 主 - 截止", bg: "from-[#62547f] to-[#5a4c77]", text: "text-[#ece6f6]", icon: "auto", skin: SK_FAST, auto: "curve" },
  { name: "Track 15", bg: "from-[#4e575c] to-[#495257]", text: "text-[#757f84]" },
  { name: "Track 16", bg: "from-[#4e575c] to-[#495257]", text: "text-[#757f84]" },
];

function TrackHead({ t }: { t: Track }) {
  return (
    <div className="flex h-14 bg-[#222c32]">
      <div className={`flex h-14 w-[100px] flex-col justify-between rounded-r-[8px] bg-gradient-to-b pb-px pl-[2px] pr-[5px] ${t.bg} ${t.text}`}>
        <div className={`text-[13px] ${t.auto ? "leading-4" : "leading-[17px]"} ${t.auto === "flat" ? "[word-break:keep-all]" : ""} ${t.auto === "curve" ? "whitespace-nowrap" : ""}`}>{t.name}</div>
        <div className="flex h-[18px] items-center">
          <span className="ml-3 flex gap-[2px] self-end pb-[3px]" aria-hidden="true">{[0, 1, 2].map((k) => <span key={k} className="size-[2px] bg-black/30" />)}</span>
          <span className="ml-auto mr-[5px]">
            {t.icon === "note" && <Ico size={16}><path d="M12 0h2c0 5 6 7 4 15-1-4-2-6-4.500-7l-1 10a4.500 3.500 0 1 1-2-3z" /></Ico>}
            {t.icon === "wave" && <Ico size={15}><Wave /></Ico>}
            {t.icon === "auto" && <Ico size={17}><Auto /></Ico>}
          </span>
          <button aria-label={`Mute ${t.name}`} className="size-[11px] rounded-full border border-[#d0dcc8]/70 bg-[#1e3a10] p-[1px]"><span className="block size-full rounded-full bg-[#a4e84a]" /></button>
        </div>
      </div>
      <div className="ml-px flex-1 border-b border-r border-[#1d272d] bg-[#323d44]" />
    </div>
  );
}
function ClipHead({ skin, name, auto }: { skin: ClipSkin; name: string; auto?: boolean }) {
  return (
    <div className={`flex h-[15px] items-center gap-[3px] border bg-gradient-to-b pl-px text-[12px] leading-[13px] ${skin.head}`}>
      {auto ? <Ico size={10} className={skin.icon}><g {...stroke} strokeWidth="2.500"><circle cx="4" cy="19" r="3" /><circle cx="19" cy="5" r="3" /><path d="M6 16c4-1 6-8 10-9" /></g></Ico> : <PatIcon className={skin.icon} />}
      <span className="whitespace-nowrap">{name}</span>
    </div>
  );
}
function Lane({ t }: { t: Track }) {
  return (
    <div className="flex h-14 overflow-hidden border-b border-[#1b2930]">
      {t.clips && <span className={`shrink-0 ${t.lead}`} />}
      {t.clips?.map((c, i) => (
        <div key={i} className={`w-48 shrink-0 ${t.skin!.body}`}>
          <ClipHead skin={t.skin!} name={c.name} />
          <div className={`h-10 ${BARS}`}><Notes notes={c.notes} color={t.skin!.note} className="h-10 w-48" /></div>
        </div>
      ))}
      {t.auto && (
        <div className={`min-w-0 flex-1 ${t.skin!.body}`}>
          <ClipHead skin={t.skin!} name={t.name} auto />
          <div className={`h-10 ${BARS}`}>
            <svg viewBox="0 0 1419 40" preserveAspectRatio="none" className="h-10 w-full" fill="none" stroke={t.skin!.note} strokeWidth="1.500" aria-hidden="true">
              {t.auto === "flat"
                ? <><path d="M0 10h1419v30H0z" fill={t.skin!.note} fillOpacity=".2" stroke="none" /><path d="M0 10h1419" strokeWidth="2" /></>
                : <><path d="M0 17C140 7 250 3 400 1h1019v39H0z" fill={t.skin!.note} fillOpacity=".13" stroke="none" /><path d="M0 17C140 7 250 3 400 1h1019" /></>}
            </svg>
          </div>
        </div>
      )}
    </div>
  );
}

function MiniMap() {
  const r = (x: number, y: number, w: number, h: number, f: string, k: string) => <rect key={k} x={x} y={y} width={w} height={h} fill={f} />;
  const dash = (x: number, y: number, w: number, c: string, d: string) => <path key={`${x}-${y}`} d={`M${x} ${y}h${w}`} stroke={c} strokeDasharray={d} />;
  return (
    <svg viewBox="0 0 1380 20" preserveAspectRatio="none" className="h-5 min-w-0 flex-1 bg-[#353e45]" shapeRendering="crispEdges" aria-label="Arrangement overview">
      {r(0, 0, 255, 18, "#55636a", "v")}
      {r(0, 0, 1240, 1, "#8d9018", "c")}
      {r(69, 1, 344, 2, "#5a7a1e", "p1")}{r(482, 1, 483, 2, "#5a7a1e", "p2")}
      {r(0, 0, 255, 1, "#e6e63c", "cv")}{r(69, 1, 186, 2, "#8fae22", "pv")}
      {r(965, 2, 275, 2, "#24276c", "l")}
      {r(689, 4, 69, 1, "#b2741c", "o1")}{r(827, 4, 138, 1, "#b2741c", "o2")}
      {dash(276, 5.5, 69, "#3d8fae", "14 3")}{dash(620, 5.5, 138, "#3d8fae", "14 3")}{dash(896, 5.5, 69, "#3d8fae", "14 3")}
      {dash(551, 6.5, 69, "#5b666b", "2 2")}{dash(482, 10.5, 69, "#566166", "2 2")}{dash(620, 10.5, 138, "#566b58", "3 2")}
      {dash(758, 8.5, 207, "#5a646a", "2 3")}{dash(758, 10.5, 207, "#56666a", "3 2")}
      {r(206, 12, 207, 2, "#5c1c78", "b1")}{r(689, 12, 276, 2, "#5c1c78", "b2")}{r(206, 12, 49, 2, "#8f22a8", "bv")}
      {r(0, 14, 1163, 2, "#7a5828", "e")}{r(0, 16, 1163, 1, "#2a5f80", "rh")}{r(0, 17, 1240, 1, "#4f4670", "f")}
      {r(0, 14, 255, 2, "#b58c4a", "ev")}{r(0, 16, 255, 1, "#5aa0cc", "rv")}{r(0, 17, 255, 1, "#8577ae", "fv")}
      {Array.from({ length: 36 }, (_, i) => r(i * 34.4, 0, 1, 3, "#3c4530", `t${i}`))}
      {r(254, 0, 1, 18, "#8b979d", "ve")}
    </svg>
  );
}

const Arrow = ({ d }: { d: string }) => <svg width="10" height="10" viewBox="0 0 10 10" fill="none" stroke="#20272c" strokeWidth="1.500"><path d={d} /></svg>;
const SB = "flex shrink-0 items-center justify-center border border-[#6b747a] bg-[#505960]";

function Playlist() {
  const modes: [string, React.ReactNode][] = [
    ["Draw", <Ico size={15}><path d="M2 2l6 1 13 14-4 5L3 8zM5 8l11 11M8 5l11 11" {...stroke} strokeWidth="2" /></Ico>],
    ["Paint", <Ico size={16} className="text-[#5c93bb]"><path d="M8 1l4 5 7 7-2 4 6 4-2 2-6-3-4 2-9-8 2-2-3-4 4 2 2-1z" /></Ico>],
    ["Delete", <Ico size={14}><circle cx="12" cy="12" r="10" {...stroke} strokeWidth="2.500" /><path d="M5 19 19 5" {...stroke} strokeWidth="2.500" /></Ico>],
    ["Mute", <Ico size={16}><path d="M1 8h4l8-6v20l-8-6H1zM16 7l2-1 2 4 2-4 2 1-3 5 3 5-2 1-2-4-2 4-2-1 3-5z" /></Ico>],
    ["Slip", <Ico size={16}><path d="M0 12l8-8v5h8V4l8 8-8 8v-5H8v5zM11 8h2v8h-2z" /></Ico>],
    ["Slice", <Ico size={15}><path d="M0 2h9v13zM12 2h8c2 6 2 14 0 20h-3l-5-8z" /></Ico>],
    ["Select", <Ico size={14}><path d="M2 8V4l2-2h5M15 2h5l2 2v4M22 16v4l-2 2h-5M9 22H4l-2-2v-4" {...stroke} strokeWidth="2.400" /></Ico>],
    ["Zoom", <Ico size={16}><Lens /></Ico>],
    ["Playback", <Ico size={16}><path d="M1 8h4l8-6v20l-8-6H1zM16 3h2v18h-2zM21 3h2v18h-2z" /></Ico>],
  ];
  return (
    <section className="flex min-w-0 flex-1 flex-col bg-[#454e54]">
      <div className="flex h-6 shrink-0 items-center pb-px text-[#8b949a]">
        <Tri className="ml-2 text-[#757e84]" />
        <Ico size={15} className="ml-[10px] text-[#519a78]"><Magnet /></Ico>
        <div className="ml-4 flex">
          {modes.map(([n, icon]) => <button key={n} aria-label={n} className="flex h-5 w-[21px] items-center justify-center">{icon}</button>)}
        </div>
        <Ico size={15} className="ml-[14px]"><path d="M1 8h4l6-5v18l-6-5H1z" {...stroke} strokeWidth="2" /><path d="M15 5l8 7-8 7z" /></Ico>
        <h1 className="flex items-center gap-[5px] pl-[6px] text-[13px] [font-family:'Noto_Sans','Noto_Sans_CJK_SC',sans-serif]">Playlist - Arrangement <Tri className="text-[#666f75]" /> Fast LP - 主 - 截止 <Tri className="text-[#666f75]" /></h1>
        <div className="ml-auto flex items-center gap-[10px] pr-[7px]">
          <button aria-label="Minimize playlist" className="mb-1 h-[2px] w-[7px] bg-current" />
          <button aria-label="Restore playlist"><svg width="10" height="10" fill="none" stroke="currentColor"><path d="M.5 3.500h6v6h-6zM3 1.500h6.500V8M.5 5h6" /></svg></button>
          <button aria-label="Close playlist"><svg width="10" height="10" fill="none" stroke="currentColor" strokeWidth="1.500"><path d="m1 1 8 8m0-8-8 8" /></svg></button>
        </div>
      </div>
      <div className="flex min-h-0 flex-1">
        <Picker />
        <div className="ml-[5px] flex min-w-0 flex-1 flex-col">
          <div className="flex h-10 shrink-0">
            <svg width="30" height="40" viewBox="0 0 30 40" className="shrink-0"><path d="M.5 40V36L9 5c1-3 2-4 5-4h16v39z" fill="#525c63" stroke="#2a3237" /><path d="M13 28h8M17 24v8" stroke="#e2e6e8" strokeWidth="2" /></svg>
            <div className="flex w-[82px] shrink-0 flex-col border-l border-r-2 border-t border-[#2a3237] bg-[#525c63] text-[#848d92]">
              <div className="flex h-[18px] items-center justify-around px-1"><Ico size={18}><Wave /></Ico><Ico size={18} className="text-[#e6eaec]"><Auto /></Ico><Ico size={17}><Piano /></Ico></div>
              <div className="flex h-5 items-center justify-between pl-3 pr-1 text-[8px] font-bold text-[#d5dadd]">
                <label className="flex items-center gap-px">步进<input type="checkbox" className="size-[11px] appearance-none rounded-[3px] border border-[#c5cbce]" /></label>
                <label className="flex items-center gap-px">滑动<input type="radio" className="size-[9px] appearance-none rounded-full border border-[#8a9398] bg-[radial-gradient(circle,#e0e4e6_25%,transparent_30%)]" /></label>
              </div>
            </div>
            <div className="flex min-w-0 flex-1 flex-col">
              <div className="flex h-[21px] items-center">
                <button aria-label="Scroll left" className={`h-[19px] w-5 ${SB}`}><Arrow d="M7 1 3 5l4 4" /></button>
                <MiniMap />
                <button aria-label="Scroll right" className={`h-[19px] w-5 ${SB}`}><Arrow d="m3 1 4 4-4 4" /></button>
              </div>
              <div className="flex h-[19px] items-center overflow-hidden border-b border-[#2a3a42] bg-[#1f2a31] text-[#8f9ca2]">
                {Array.from({ length: 30 }, (_, i) => (
                  <span key={i} className={`flex h-[18px] shrink-0 pl-px leading-[19px] ${i === 29 ? "w-6" : "w-12"} ${i % 4 === 0 ? "text-[13px]" : "text-[11px]"}`}>
                    {i === 0 && <svg width="8" height="9" className="-ml-px -mr-[7px]"><path d="M0 0h8L0 9z" fill="#bfe86a" /></svg>}{i + 1}
                  </span>
                ))}
              </div>
            </div>
            <div className="flex w-[21px] shrink-0 flex-col justify-between bg-[#2a3237] pl-px"><button aria-label="Zoom" className={`h-5 ${SB}`}><span className="h-1 w-[3px] bg-[#20272c]" /></button><button aria-label="Scroll up" className={`h-[19px] ${SB}`}><Arrow d="m1 7 4-4 4 4" /></button></div>
          </div>
          <div className="flex min-h-0 flex-1 overflow-hidden">
            <div className="w-[112px] shrink-0 border-l border-[#262e33]">{tracks.map((t) => <TrackHead key={t.name} t={t} />)}</div>
            <div className="min-w-0 flex-1 overflow-hidden bg-[repeating-linear-gradient(90deg,#14212a_0px,#14212a_1px,transparent_1px,transparent_48px),repeating-linear-gradient(90deg,#34444d_0px,#34444d_192px,#2e3d46_192px,#2e3d46_384px)]">
              {tracks.map((t) => <Lane key={t.name} t={t} />)}
            </div>
            <div className="flex w-[21px] shrink-0 flex-col border-l border-[#1d252a] bg-[#373f45]">
              <div className="h-[33px] border border-[#6b747a] bg-[#505960]" />
              <button aria-label="Scroll down" className={`mt-auto h-[19px] ${SB}`}><Arrow d="m1 3 4 4 4-4" /></button>
            </div>
          </div>
        </div>
      </div>
    </section>
  );
}

/* ---------- desktop taskbar ---------- */
function Taskbar() {
  const apps: [string, React.ReactNode, string][] = [
    ["Start", <svg width="17" height="17" viewBox="0 0 17 17" fill="#fff"><path d="M0 2.300 7.500 1.200V8H0zM8.500 1 17 0v8H8.500zM0 9h7.500v6.800L0 14.700zM8.500 9H17v8l-8.500-1z" /></svg>, ""],
    ["Files", <svg width="22" height="18" viewBox="0 0 22 18"><path d="M0 0h9l2 2h11v15H0z" fill="#fcd462" /><path d="M0 0h9l1 3H0z" fill="#e0a010" /><path d="M4 18V9h14v9h-4v-5H8v5z" fill="#3f8fd6" /></svg>, ""],
    ["Edge", <svg width="24" height="24" viewBox="0 0 24 24"><defs><linearGradient id="eg"><stop stopColor="#2aa0e8" /><stop offset="1" stopColor="#5fe06a" /></linearGradient></defs><circle cx="12" cy="12" r="12" fill="#1565b8" /><path d="M0 12A12 12 0 0 1 24 12c0 4-4 6-9 4 1-5-3-8-7-7S1 12 0 12z" fill="url(#eg)" /><path d="M9 10c-4 5 0 11 7 12 3 0 5-3 6-4-5 2-10 0-10-4 0-2 1-3 1-3z" fill="#0c3f85" /></svg>, "u"],
    ["Android Studio", <svg width="23" height="23" viewBox="0 0 23 23"><circle cx="11.500" cy="11.500" r="11.500" fill="#fff" /><path d="M11.500 6 7 18M11.500 6 16 18M6 13c4 3 7 3 11 0" fill="none" stroke="#3d7fe8" strokeWidth="2.200" /><circle cx="11.500" cy="6" r="2.200" fill="#2a3f6a" /><circle cx="17" cy="12" r="2" fill="#3ddc84" /></svg>, ""],
    ["Code", <svg width="24" height="24" viewBox="0 0 24 24"><path d="M17 0 6.500 9.700 2 6.200 0 7.200v9.600l2 1L6.500 14.300 17 24l7-3V3zM3 9.500 5 12l-2 2.500zM17 7v10l-6.500-5z" fill="#1f8ad2" /><path d="m17 0 7 3v18l-7 3z" fill="#35a9f2" /></svg>, ""],
    ["Settings tool", <svg width="20" height="20" viewBox="0 0 20 20"><circle cx="9" cy="9" r="7" fill="none" stroke="#4b93d6" strokeWidth="4" strokeDasharray="3.500 2" /><circle cx="9" cy="9" r="5.500" fill="none" stroke="#4b93d6" strokeWidth="3" /><path d="M6 9.500h7a4 4 0 1 0-1 3" fill="none" stroke="#5db04a" strokeWidth="1.800" /><circle cx="16" cy="16" r="3" fill="#3b7fc0" /></svg>, ""],
    ["WPS", <svg width="24" height="17" viewBox="0 0 24 17" fill="none" stroke="#f5382c" strokeWidth="3.500"><path d="M1 2h6l5 7M3 2l6 13 5-10 3 9 5-12h-9" /></svg>, ""],
    ["QQ", <svg width="24" height="24" viewBox="0 0 24 24"><rect width="24" height="24" rx="5" fill="#fff" /><path d="M12 2c4 0 5 3 5 7l3 6c0 2-1 2-2 1 0 3-2 5-6 5s-6-2-6-5c-1 1-2 1-2-1l3-6c0-4 1-7 5-7z" fill="#111" /><ellipse cx="12" cy="16" rx="4" ry="4.500" fill="#fff" /><path d="M6 11c4 2 8 2 12 0v3c-4 1-8 1-12 0z" fill="#e0202c" /><ellipse cx="12" cy="9" rx="3" ry="1.300" fill="#f7a81b" /><circle cx="10.500" cy="5.800" r="1.200" fill="#fff" /><circle cx="13.500" cy="5.800" r="1.200" fill="#fff" /><path d="M6 20h5v2H6zM13 20h5v2h-5z" fill="#f7a81b" /></svg>, "u"],
    ["FL Studio", <svg width="24" height="24" viewBox="0 0 24 24"><circle cx="12" cy="13" r="11" fill="#2c333c" /><path d="M8 6c6-3 10 1 9 6-1 4-3 8-6 10-4-2-7-11-3-16z" fill="#f58a1f" /><path d="M9 8c2 4 1 8 2 13-4-3-5-10-2-13z" fill="#ffc25a" /><path d="M7 6c1-3 5-2 5-4l2-2-1 4c3-1 5 0 5 3-3 1-8 2-11-1z" fill="#5cb82c" /></svg>, "a"],
  ];
  return (
    <footer className="flex h-10 shrink-0 items-stretch bg-[linear-gradient(90deg,#333529_0%,#3a392f_12%,#46392f_24%,#36402e_33%,#3a3e30_42%,#2f3f3d_48%,#3c3b36_55%,#34372e_68%,#2d3a2d_80%,#3c4040_86%,#303b2b_91%,#22342a_100%)] text-white [font-family:'Noto_Sans','Noto_Sans_CJK_SC',sans-serif]">
      {apps.map(([n, icon, state]) => (
        <button key={n} aria-label={n} className={`flex w-[49px] flex-col items-center ${state === "a" ? "bg-white/25" : ""}`}>
          <span className="flex flex-1 items-center">{icon}</span>
          <span className={`h-[2px] ${state === "a" ? "w-full bg-[#76b9ed]" : state === "u" ? "w-10 bg-[#76b9ed]" : "w-10"}`} />
        </button>
      ))}
      <div className="ml-auto flex items-center gap-2">
        <svg width="12" height="8" fill="none" stroke="#fff" strokeWidth="1.500"><path d="m1 7 5-5 5 5" /></svg>
        <span className="ml-1 flex h-4 w-3 items-center justify-center rounded-full bg-[#0a7df0]"><FaBluetoothB size={11} /></span>
        <span className="ml-[2px] flex size-4 items-center justify-center bg-gradient-to-tr from-[#ff7a10] to-[#e8f020]"><span className="h-[7px] w-[9px] rounded-[2px] border-2 border-white" /></span>
        <svg width="17" height="14" viewBox="0 0 17 14" fill="none" stroke="#fff"><path d="M6 2.500h10.500v8H4V6M8 13.500h5M10.500 10.500v3M.5.5H4v3H.5zM2.500 4v9" /></svg>
        <svg width="17" height="14" viewBox="0 0 17 14" fill="none" stroke="#fff"><path d="M.5 5h2L6 1.500v11L2.500 9h-2zM8 5c1 1 1 3 0 4M10.500 3c2 2 2 6 0 8" /><path d="M13 1c3 3 3 9 0 12" opacity=".5" /></svg>
        <span className="-ml-[2px] text-[16px]">中</span>
        <div className="-ml-[2px] text-center text-[12px] leading-[19px]"><div>23:21</div><div>2024/11/26</div></div>
        <svg width="17" height="16" viewBox="0 0 17 16" className="ml-[8px]" fill="#fff"><path d="M0 0h17v13h-6l-2.500 3L6 13H0z" /><path d="M3 3.500h11M3 6.500h11M3 9.500h7" stroke="#2c3a2c" /></svg>
        <span className="ml-[12px] mr-[3px] h-10 w-px bg-white/40" />
      </div>
    </footer>
  );
}

export default function App() {
  return (
    <div className={`flex h-screen flex-col overflow-hidden bg-[#454e54] ${NARROW}`}>
      <TopBar />
      <ToolRow />
      <main className="flex min-h-0 flex-1">
        <Browser />
        <div className="flex w-2 shrink-0 items-center justify-center border-x border-[#2a3237] bg-[#4c555b]"><span className="h-5 w-0 border-l-2 border-dotted border-[#2e363b]" /></div>
        <Playlist />
      </main>
      <Taskbar />
    </div>
  );
}
